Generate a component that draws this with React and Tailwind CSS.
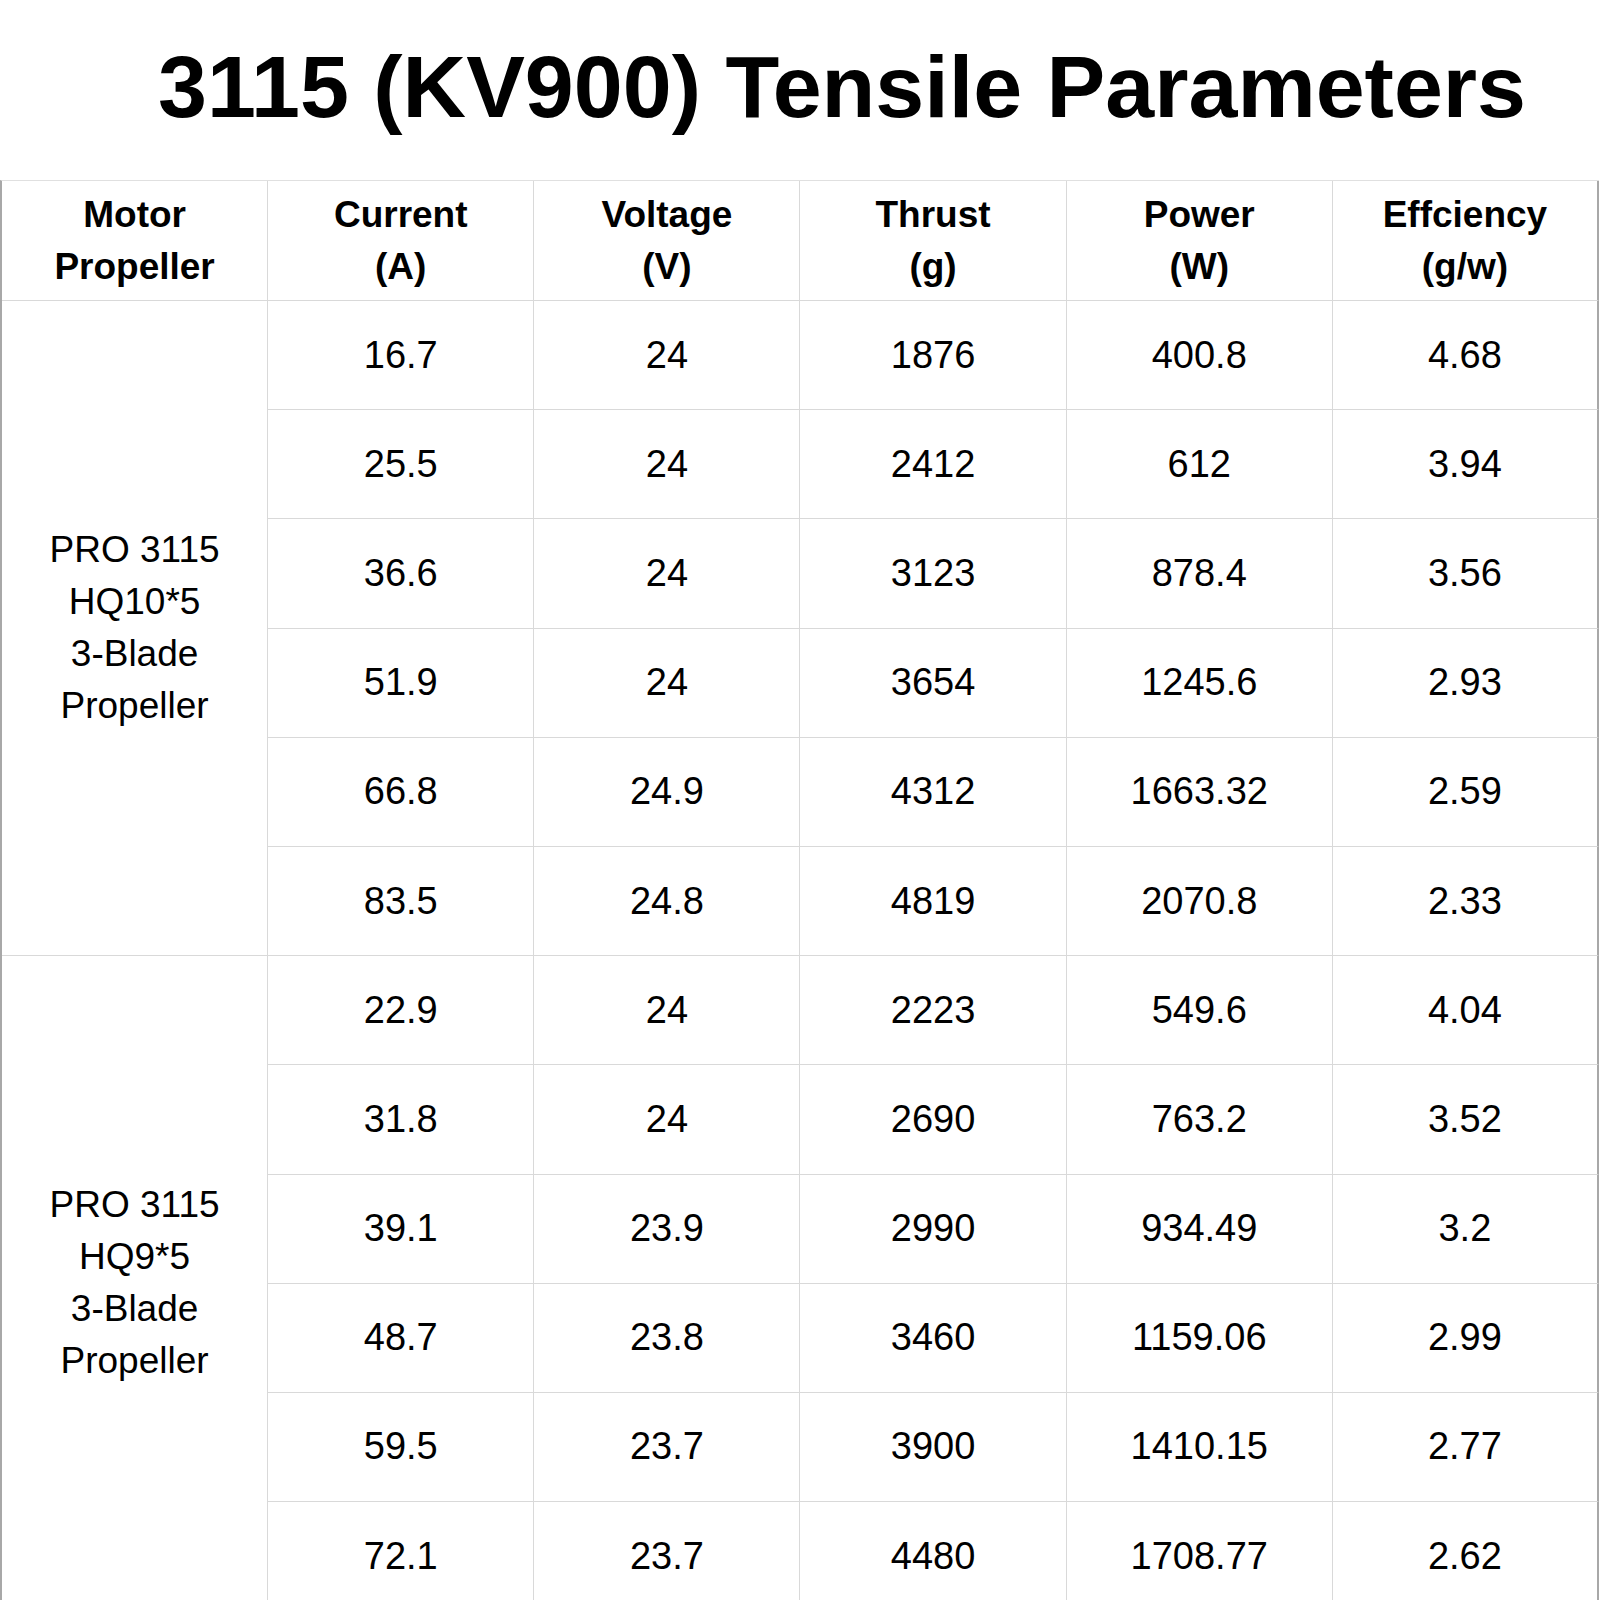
import React from "react";

const groups = [
  {
    label: ["PRO 3115", "HQ10*5", "3-Blade", "Propeller"],
    rows: [
      ["16.7", "24", "1876", "400.8", "4.68"],
      ["25.5", "24", "2412", "612", "3.94"],
      ["36.6", "24", "3123", "878.4", "3.56"],
      ["51.9", "24", "3654", "1245.6", "2.93"],
      ["66.8", "24.9", "4312", "1663.32", "2.59"],
      ["83.5", "24.8", "4819", "2070.8", "2.33"],
    ],
  },
  {
    label: ["PRO 3115", "HQ9*5", "3-Blade", "Propeller"],
    rows: [
      ["22.9", "24", "2223", "549.6", "4.04"],
      ["31.8", "24", "2690", "763.2", "3.52"],
      ["39.1", "23.9", "2990", "934.49", "3.2"],
      ["48.7", "23.8", "3460", "1159.06", "2.99"],
      ["59.5", "23.7", "3900", "1410.15", "2.77"],
      ["72.1", "23.7", "4480", "1708.77", "2.62"],
    ],
  },
];

const headers = [
  ["Motor", "Propeller"],
  ["Current", "(A)"],
  ["Voltage", "(V)"],
  ["Thrust", "(g)"],
  ["Power", "(W)"],
  ["Effciency", "(g/w)"],
];

export default function App() {
  return (
    <div
      className="w-[1600px] h-[1600px] overflow-hidden bg-white text-black"
      style={{ fontFamily: '"Liberation Sans", Arial, sans-serif' }}
    >
      <div className="h-[180px] pt-[43px] pl-[84px] text-center">
        <h1 className="text-[88px] leading-[88px] font-bold">
          3115 (KV900) Tensile Parameters
        </h1>
      </div>
      <div className="grid grid-cols-6 grid-rows-[120px_repeat(12,109.2px)] border-l-2 border-l-[#a8a8a8] border-t border-t-[#e0e0e0] w-[1599px]">
        {headers.map((h, i) => (
          <div
            key={i}
            className={`flex flex-col items-center justify-center border-b border-b-[#d9d9d9] border-r ${
              i === 5 ? "border-r-2 border-r-[#a8a8a8]" : "border-r-[#d9d9d9]"
            } text-[37px] leading-[52px] font-bold`}
          >
            <span>{h[0]}</span>
            <span>{h[1]}</span>
          </div>
        ))}
        {groups.map((g, gi) => (
          <React.Fragment key={gi}>
            <div
              className="row-span-6 col-start-1 flex flex-col items-center justify-center border-r border-r-[#d9d9d9] border-b border-b-[#d9d9d9] text-[37px] leading-[52px]"
              style={{ gridRowStart: 2 + gi * 6 }}
            >
              {g.label.map((l, li) => (
                <span key={li}>{l}</span>
              ))}
            </div>
            {g.rows.map((r, ri) =>
              r.map((v, ci) => (
                <div
                  key={`${ri}-${ci}`}
                  className={`flex items-center justify-center border-b border-b-[#d9d9d9] border-r ${
                    ci === 4 ? "border-r-2 border-r-[#a8a8a8]" : "border-r-[#d9d9d9]"
                  } text-[38px]`}
                  style={{ gridRowStart: 2 + gi * 6 + ri, gridColumnStart: 2 + ci }}
                >
                  {v}
                </div>
              ))
            )}
          </React.Fragment>
        ))}
      </div>
    </div>
  );
}
